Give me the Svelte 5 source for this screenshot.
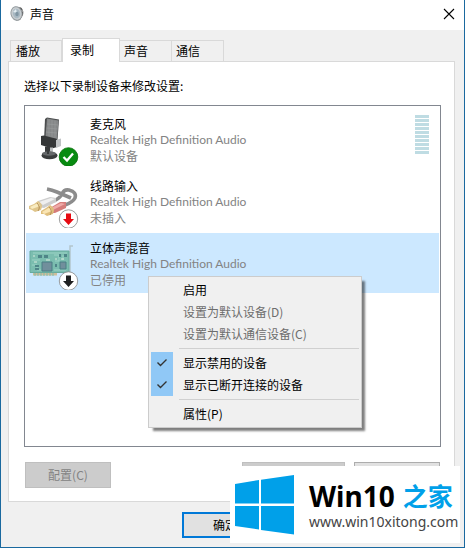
<script>
  const tabs = ['播放', '录制', '声音', '通信'];
  let active = $state('录制');
  const devices = [
    { id: 'mic', name: '麦克风', status: '默认设备' },
    { id: 'line', name: '线路输入', status: '未插入' },
    { id: 'mix', name: '立体声混音', status: '已停用' }
  ];
  let selected = $state('mix');
  const bars = Array.from({ length: 10 });
</script>

<div class="window">
  <header>
    <svg class="app" viewBox="0 0 16 16" aria-hidden="true">
      <path d="M6 1 11 1.500Q14 4 13 9L10 14 6 14.500Z" fill="#494949" />
      <ellipse cx="6.500" cy="7.500" rx="5.500" ry="6.800" fill="#c9ced1" stroke="#969da1" transform="rotate(-12 6.500 7.500)" />
      <ellipse cx="6.500" cy="7.500" rx="3.700" ry="4.900" fill="#a9b9c3" transform="rotate(-12 6.500 7.500)" />
      <path d="M3 6 6 3 7 7Z" fill="#e3edf2" />
      <ellipse cx="7" cy="8" rx="1.700" ry="2.200" fill="#8196a3" />
      <path d="M12 4l1 2M12 9l-1 2" stroke="#aaa" />
    </svg>
    <h1>声音</h1>
    <button class="close" aria-label="关闭">
      <svg viewBox="0 0 10 10"><path d="M0 0 10 10M10 0 0 10" stroke="#000" stroke-width="1.100" /></svg>
    </button>
  </header>

  <main>
    <div class="tabs" role="tablist">
      {#each tabs as tab}
        <button role="tab" class:active={tab === active} aria-selected={tab === active} onclick={() => (active = tab)}>{tab}</button>
      {/each}
    </div>
    <section class="panel">
      <p>选择以下录制设备来修改设置:</p>
      <div class="list" role="listbox" aria-label="录制设备">
        {#each devices as d}
          <button class="device" role="option" aria-selected={d.id === selected} class:selected={d.id === selected} onclick={() => (selected = d.id)}>
            <svg class="icon" viewBox="0 0 54 54" aria-hidden="true">
              {#if d.id === 'mic'}
                <path d="M19 7 21 5.500 33 7.500 31.500 28H18Z" fill="#4b4d4e" />
                <path d="M21 6.500 32.500 8.500 31 27 19.500 25Z" fill="#858788" />
                <path d="M23 8v16M26 8v17M29 9v17M21 12l11 1M20.500 16l11 1M20 20l11 1" stroke="#9b9d9e" stroke-width=".6" />
                <path d="M15 24 18 23.500 31 27V35L26 36.500 15 33Z" fill="#353738" />
                <path d="M30 28 35 26.500V34L30 36Z" fill="#bfc2c4" />
                <path d="M22 35.500H27V43H22Z" fill="#bdc0c1" />
                <path d="M19 34.500H24V42H19Z" fill="#393b3c" />
                <ellipse cx="23.500" cy="43.500" rx="8" ry="3.800" fill="#3a3c3d" />
                <ellipse cx="23" cy="41.500" rx="7" ry="2.200" fill="#65686a" />
                <path d="M21 35h2v7h-2Z" fill="#393b3c" />
                <circle cx="42.500" cy="45" r="9.300" fill="#078b10" stroke="#067009" stroke-width=".8" />
                <path d="m37.500 45 3.500 3.500 6-7" fill="none" stroke="#fff" stroke-width="2.300" />
              {:else if d.id === 'line'}
                <path d="M21 15Q26 16 31 18L45 24M28 27Q34 24 36 20 38 15 43 16 51 18 49 24 47 28 39 31" fill="none" stroke="#8c8c8c" stroke-width="3.600" />
                <path d="M12 27 24 23 30 24V28L18 34 12 33Z" fill="#cdcdcd" />
                <path d="m13 28 12-4 4 1-12 6Z" fill="#efefef" />
                <path d="M24 34 34 28 40 28V34L29 39 24 39Z" fill="#d57d7b" />
                <path d="m25 34 10-5 4 1-12 6Z" fill="#efaaa8" />
                <path d="M3 32 8 30 12 27Q18 30 15 36L9 38 6 36 3 35Z" fill="#dfc58b" />
                <path d="m4 33 8-4 2 3-8 3Z" fill="#f8ebc0" />
                <path d="M15 37 20 34 24 31Q30 34 27 40L21 42 18 40 15 40Z" fill="#dfbe7d" />
                <path d="m16 38 8-5 2 4-8 3Z" fill="#fae5b3" />
                <path d="M11 29q4 4 1 8M23 33q4 4 1 8" fill="none" stroke="#b48f53" />
              {:else}
                <path d="M47 10h-3V36" fill="none" stroke="#b3c5cd" stroke-width="1.500" />
                <path d="M4 15H43V36.500H4Z" fill="#7bbdaf" stroke="#68ab9d" />
                <path d="M7 37H31V39.500H7Z" fill="#cebd99" />
                <path d="M9 37v3M12 37v3M15 37v3M18 37v3M21 37v3M24 37v3M27 37v3" stroke="#7bbdaf" />
                <path d="M6 29h5v5h4M6 24h8M28 19h5v6h-4M7 17h34M28 34h12M37 19v5" fill="none" stroke="#a5d9cb" stroke-width=".8" />
                <path d="M16 26H26V35H16ZM34 26H40V33H34Z" fill="#718f9c" stroke="#4b7e84" />
                <path d="M12 19h4v3h-4ZM18 19h4v3h-4ZM33 18h2v3h-2ZM38 18h3v3h-3ZM29 28h2v3h-2ZM9 29h4v2H9ZM9 32h4v2H9Z" fill="#4f8588" />
                <path d="M7 20h2M8 26h3M20 24h4M29 23h2M35 23h3" stroke="#d9eadd" />
              {/if}
              {#if d.id !== 'mic'}
                <circle cx="42.500" cy="45" r="9.200" fill="#fff" stroke="#858585" stroke-width=".8" />
                <path d="M40 39.500h5V45h3L42.500 51 37 45h3Z" fill={d.id === 'line' ? '#e60b12' : '#202020'} />
              {/if}
            </svg>
            <span class="info">
              <span class="name">{d.name}</span>
              <span class="driver">Realtek High Definition Audio</span>
              <span>{d.status}</span>
            </span>
            {#if d.id === 'mic'}
              <span class="meter">{#each bars as _}<i></i>{/each}</span>
            {/if}
          </button>
        {/each}
      </div>
      <div class="actions">
        <button class="btn" disabled>配置(C)</button>
        <span class="spring"></span>
        <button class="btn wide" disabled aria-label="设为默认值"></button>
        <button class="btn" aria-label="属性"></button>
      </div>
    </section>
  </main>

  <footer><button class="btn ok">确定</button></footer>

  <div class="menu" role="menu">
    <button role="menuitem">启用</button>
    <button role="menuitem" disabled>设置为默认设备(D)</button>
    <button role="menuitem" disabled>设置为默认通信设备(C)</button>
    <hr />
    {#each ['显示禁用的设备', '显示已断开连接的设备'] as label}
      <button role="menuitemcheckbox" aria-checked="true">
        <span class="check"><svg viewBox="0 0 12 10"><path d="m1.500 4.500 3 3L10.500 1.500" fill="none" stroke="#333" stroke-width="1.400" /></svg></span>{label}
      </button>
    {/each}
    <hr />
    <button role="menuitem">属性(P)</button>
  </div>

  <aside>
    <svg viewBox="0 0 60 60" aria-hidden="true">
      <path d="M0 9 24 5V28.500H0ZM26 4.700 59 0V28.500H26ZM0 31H24V54.500L0 51ZM26 31H59V59.500L26 55Z" fill="#00a0e9" />
    </svg>
    <div class="brand">
      <strong>Win10 <em>之家</em></strong>
      <span>www.win10xitong.com</span>
    </div>
  </aside>
</div>

<style>
  :global(body) { margin: 0; }
  * { box-sizing: border-box; }
  button { font: inherit; color: inherit; margin: 0; }
  .window {
    position: relative; display: flex; flex-direction: column; min-height: 100vh;
    border: 1px solid #1a699f; border-top: 0; background: #f0f0f0; color: #000;
    font: 12px/16px "Noto Sans CJK SC", "Noto Sans", sans-serif;
  }
  header { display: flex; align-items: center; height: 30px; padding: 0 10px 2px 9px; background: #fff; }
  .app { width: 16px; height: 16px; }
  h1 { flex: 1; margin: 0 0 0 4px; font-size: 12px; font-weight: 400; }
  .close { display: flex; border: 0; padding: 0; background: none; }
  .close svg { width: 10px; height: 10px; overflow: visible; }
  main { flex: 1; display: flex; flex-direction: column; padding: 8px 9px 0 7px; }
  .tabs { display: flex; align-items: flex-end; padding-left: 2px; }
  .tabs button { width: 52px; height: 21px; border: 1px solid #d9d9d9; border-width: 1px 1px 0 0; padding: 0 0 0 4px; background: #f0f0f0; text-align: left; }
  .tabs button:first-child { border-left-width: 1px; padding-left: 5px; }
  .tabs button.active { position: relative; width: 58px; height: 24px; margin-bottom: -1px; border-left-width: 1px; padding: 0 0 2px 7px; background: #fff; }
  .panel { flex: 1; display: flex; flex-direction: column; border: 1px solid #d9d9d9; padding: 16px 13px 13px 15px; background: #fff; }
  p { margin: 0 0 11px; }
  .list { flex: 1; display: flex; flex-direction: column; gap: 2px; border: 1px solid #828790; padding: 3px 1px; }
  .device { display: flex; align-items: center; height: 60px; border: 0; padding: 0 10px 0 0; background: none; text-align: left; }
  .device.selected { background: #cce8ff; }
  .icon { width: 54px; height: 54px; margin-right: 10px; }
  .info { flex: 1; display: flex; flex-direction: column; padding-top: 2px; color: #838383; }
  .name { color: #000; }
  .driver { font-family: Lato, "Noto Sans CJK SC", sans-serif; }
  .meter { display: flex; flex-direction: column; gap: 1px; width: 14px; margin-bottom: 10px; }
  .meter i { height: 3px; background: #bfdce3; }
  .actions { display: flex; gap: 9px; padding: 15px 1px 0; }
  .spring { flex: 1; }
  .btn { width: 86px; height: 26px; border: 1px solid #adadad; padding: 0; background: #e1e1e1; }
  .btn:disabled { border-color: #bfbfbf; background: #ccc; color: #838383; }
  .btn.wide { width: 103px; }
  footer { display: flex; justify-content: flex-end; padding: 10px 196px 9px 0; }
  .btn.ok { border: 2px solid #0078d7; }
  .menu {
    position: absolute; left: 147px; top: 276px; width: 214px; border: 1px solid #ccc; padding: 2px;
    background: #f0f0f0; box-shadow: 4px 4px 2px -1px rgba(0, 0, 0, .5);
  }
  .menu button { display: flex; align-items: center; position: relative; width: 100%; height: 22px; border: 0; padding: 0 0 0 32px; background: none; white-space: nowrap; }
  .menu button:disabled { color: #6d6d6d; }
  .menu hr { height: 1px; margin: 3px 0 3px 28px; border: 0; background: #d0d0d0; }
  .check { position: absolute; left: 0; top: 0; display: flex; align-items: center; justify-content: center; width: 22px; height: 22px; background: #90c8f6; }
  .check svg { width: 12px; height: 10px; }
  aside { position: absolute; right: 4px; bottom: 4px; display: flex; align-items: center; gap: 14px; width: 230px; height: 77px; padding: 0 5px; background: #fff; }
  aside svg { flex: none; width: 60px; height: 60px; }
  .brand { display: flex; flex-direction: column; white-space: nowrap; }
  strong { display: flex; align-items: center; gap: 8px; font-family: "Noto Sans", "Noto Sans CJK SC", sans-serif; font-size: 28px; line-height: 34px; }
  em { color: #00a0e9; font-style: normal; font-size: 25px; }
  .brand span { font-family: "Noto Sans", sans-serif; font-size: 14px; line-height: 18px; color: #444; }
</style>
